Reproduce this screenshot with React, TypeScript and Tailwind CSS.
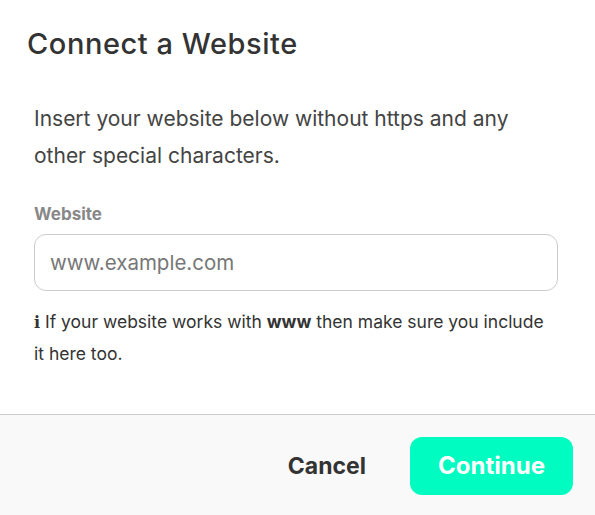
export default function App() {
  return (
    <div
      className="w-[595px] h-[515px] bg-white flex flex-col text-[#333]"
      style={{ fontFamily: 'Inter, "Noto Sans", sans-serif' }}
    >
      {/* Header */}
      <div className="pl-[27px] pt-[26px]">
        <h1 className="text-[29px] leading-[36px] font-medium text-[#333] tracking-[0.55px]">Connect a Website</h1>
      </div>

      {/* Body */}
      <div className="px-[34px] pt-[38px] flex-1">
        <p className="text-[21px] leading-[37px] text-[#444] w-[500px]">
          Insert your website below without https and any other special characters.
        </p>

        <label className="block mt-[30px] text-[17px] leading-[20px] font-bold text-[#888]">Website</label>
        <input
          type="text"
          placeholder="www.example.com"
          className="mt-[10px] w-[524px] h-[57px] rounded-[12px] border border-[#ccc] px-[15px] text-[20.5px] text-[#333] placeholder:text-[#777] outline-none"
          style={{ fontFamily: 'inherit' }}
        />

        <p className="mt-[15px] w-[520px] text-[17.5px] leading-[31px] text-[#333]">
          <span className="font-bold font-['DejaVu_Serif',serif] text-[16px]">i</span> If your website works with{' '}
          <span className="font-bold">www</span> then make sure you include it here too.
        </p>
      </div>

      {/* Footer */}
      <div className="h-[101px] border-t border-[#ccc] bg-[#f9f9f9] flex items-center justify-end gap-[44px] pr-[22px] pt-[2px]">
        <button className="text-[23px] font-bold text-[#333]">Cancel</button>
        <button className="w-[163px] h-[58px] rounded-[12px] bg-[#00fcc0] text-white text-[24px] font-bold">
          Continue
        </button>
      </div>
    </div>
  )
}
